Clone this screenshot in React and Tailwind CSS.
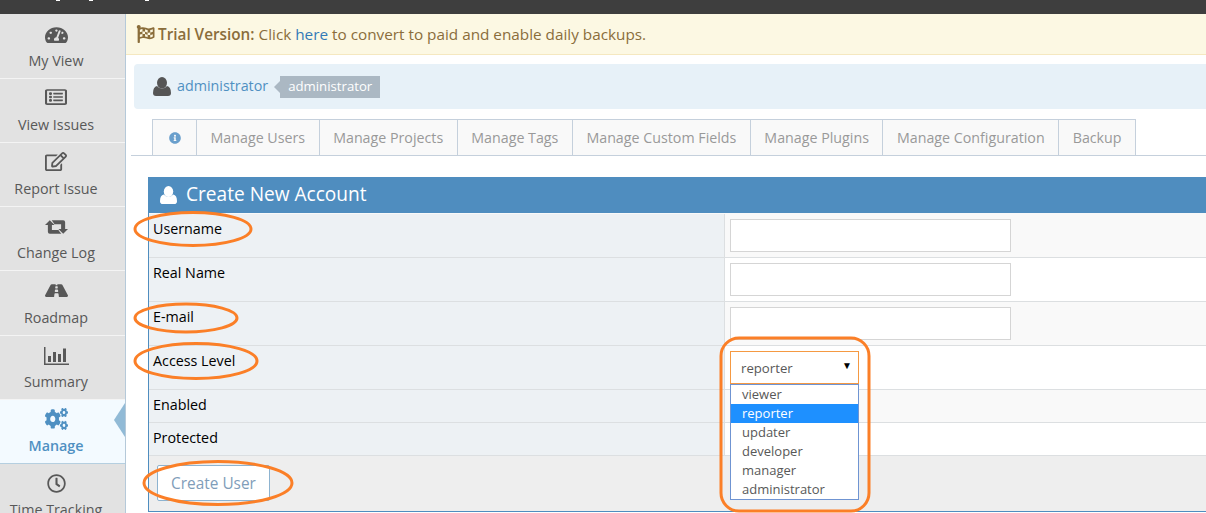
import { FaCogs, FaFlagCheckered, FaInfoCircle, FaRegClock, FaRegEdit, FaRegListAlt, FaRoad, FaTachometerAlt } from 'react-icons/fa'

function RetweetIcon({ className }) {
  return (
    <svg className={className} viewBox="0 0 24 14" fill="currentColor">
      <path d="M0 5 5 0l5 5H7.2v5H15l-1 .5 3 3.5H5q-2 0-2-2V5z" />
      <path d="M7 0h12q2 0 2 2v7h3l-5 5-5-5h2.800V4H10z" />
    </svg>
  )
}

function BarsIcon({ className }) {
  return (
    <svg className={className} viewBox="0 0 25 18" fill="currentColor">
      <rect x="0" y="0" width="1.500" height="18" />
      <rect x="0" y="16.500" width="25" height="1.500" />
      <rect x="4" y="9" width="3" height="6" />
      <rect x="9" y="5" width="3" height="10" />
      <rect x="14" y="7" width="3" height="8" />
      <rect x="19" y="1.500" width="3" height="13.500" />
    </svg>
  )
}

function UserIcon({ className }) {
  return (
    <svg className={className} viewBox="0 0 18 19" fill="currentColor">
      <ellipse cx="9" cy="5.800" rx="5" ry="5.800" />
      <path d="M0 16q0-6 4-7 2 2.500 5 2.500T14 9q4 1 4 7 0 3-3 3H3q-3 0-3-3z" />
    </svg>
  )
}

const menu = [
  { label: 'My View', icon: FaTachometerAlt, row: 'h-[65px] pt-[12px]', size: 'h-[18px] w-[23px]', text: 'top-[37px]' },
  { label: 'View Issues', icon: FaRegListAlt, row: 'h-[64px] pt-[9px]', size: 'h-[18px] w-[22px]', text: 'top-[36px]' },
  { label: 'Report Issue', icon: FaRegEdit, row: 'h-[64px] pt-[9px]', size: 'h-[19px] w-[22px]', text: 'top-[36px]' },
  { label: 'Change Log', icon: RetweetIcon, row: 'h-[64px] pt-[13px]', size: 'h-[14px] w-[23px]', text: 'top-[36px]' },
  { label: 'Roadmap', icon: FaRoad, row: 'h-[65px] pt-[11px]', size: 'h-[17px] w-[23px]', text: 'top-[37px]' },
  { label: 'Summary', icon: BarsIcon, row: 'h-[64px] pt-[11px]', size: 'h-[18px] w-[25px]', text: 'top-[36px]' },
  { label: 'Manage', icon: FaCogs, row: 'h-[64px] pt-[8px]', size: 'h-[22px] w-[23px]', text: 'top-[36px]', active: true },
  { label: 'Time Tracking', icon: FaRegClock, row: 'h-[64px] pt-[10px]', size: 'h-[19px] w-[19px]', text: 'top-[36px]' },
]

const tabs = ['Manage Users', 'Manage Projects', 'Manage Tags', 'Manage Custom Fields', 'Manage Plugins', 'Manage Configuration', 'Backup']
const levels = ['viewer', 'reporter', 'updater', 'developer', 'manager', 'administrator']

function Row({ label, h, top, shade, input, children }) {
  return (
    <div className={`flex border-b border-[#dcdfe1] ${h} ${shade ? 'bg-[#f9f9f9]' : 'bg-white'}`}>
      <div className={`w-[576px] shrink-0 bg-[#edf1f4] border-r border-[#dcdfe1] pl-[4px] text-black leading-5 ${top}`}>{label}</div>
      <div className="flex-1 pl-[5px] pt-[5px]">
        {input && <div className="h-[33px] w-[281px] border border-[#d5d5d5] bg-white" />}
        {children}
      </div>
    </div>
  )
}

export default function App() {
  return (
    <div className="relative flex h-[513px] w-[1206px] flex-col overflow-hidden bg-white font-['Open_Sans',sans-serif] text-[14.3px] text-[#585858]">
      <div className="relative h-[14px] shrink-0 bg-[#3e3e3e]">
        <span className="absolute left-[56px] top-0 h-[1px] w-[4px] bg-white" />
        <span className="absolute left-[89px] top-0 h-[1px] w-[4px] bg-white" />
        <span className="absolute left-[145px] top-0 h-[1px] w-[4px] bg-white" />
      </div>
      <div className="flex flex-1">
        <div className="w-[126px] shrink-0 border-r border-[#b5c9d9] bg-[#e2e2e2]">
          {menu.map((item) => (
            <div
              key={item.label}
              className={`relative flex flex-col items-center border-b pr-[13px] ${item.row} ${item.active ? 'border-[#b5cfe0] bg-[#f3faff] font-semibold text-[#4f90c2]' : 'border-[#f4f4f4] text-[#585858]'}`}
            >
              <item.icon className={`shrink-0 ${item.size}`} preserveAspectRatio="none" />
              <span className={`absolute whitespace-nowrap leading-5 ${item.text}`}>{item.label}</span>
              {item.active && <div className="absolute right-0 top-[3px] h-0 w-0 border-y-[17px] border-r-[11px] border-y-transparent border-r-[#91bad6]" />}
            </div>
          ))}
        </div>

        <div className="flex-1 overflow-hidden">
          <div className="flex h-[41px] items-center border-b border-[#f5e8c0] bg-[#fcf8e3] pl-[10px] text-[15.3px] text-[#8a6d3b]">
            <FaFlagCheckered className="mr-[3px] h-[18px] w-[19px]" />
            <b className="font-semibold">Trial Version:</b>
            <span className="ml-1">Click <span className="text-[#337ab7]">here</span> to convert to paid and enable daily backups.</span>
          </div>

          <div className="ml-[8px] mt-[9px] flex h-[45px] items-center rounded-l bg-[#e7f1f8] pl-[19px]">
            <UserIcon className="h-[19px] w-[18px] text-[#555555]" />
            <span className="ml-[6px] -mt-[2px] text-[#4f90c2]">administrator</span>
            <span className="ml-[6px] h-0 w-0 border-y-[6px] border-r-[6px] border-y-transparent border-r-[#abb8c3]" />
            <span className="flex h-[22px] items-center bg-[#abb8c3] px-2 text-[13.2px] text-white">administrator</span>
          </div>

          <div className="ml-[5px] mt-[10px] flex h-[37px] border-b border-[#c5d0dc] pl-[21px] text-[14.25px]">
            <div className="flex w-[45px] items-center justify-center border border-b-0 border-[#c5d0dc] bg-[#f9f9f9] text-[#6a9fcc]">
              <FaInfoCircle className="h-[12px] w-[12px]" />
            </div>
            {tabs.map((tab) => (
              <div key={tab} className="flex items-center border-y border-r border-b-0 border-[#c5d0dc] bg-[#f9f9f9] px-[13.5px] text-[#999999]">{tab}</div>
            ))}
          </div>

          <div className="ml-[22px] mt-[21px] border-l border-[#4f8dbf]">
            <div className="flex h-[36px] items-center bg-[#4f8dbf] pl-[11px] text-[19.1px] text-white">
              <UserIcon className="h-[18px] w-[17px]" />
              <span className="ml-[9px] -mt-[1px]">Create New Account</span>
            </div>
            <Row label="Username" h="h-[45px] pt-[1px]" top="pt-[5px]" shade input />
            <Row label="Real Name" h="h-[44px]" top="pt-[5px]" input />
            <Row label="E-mail" h="h-[44px]" top="pt-[5px]" shade input />
            <Row label="Access Level" h="h-[44px]" top="pt-[5px]">
              <div className="flex h-[33px] w-[129px] items-center justify-between border border-[#f59942] bg-white pl-[10px] pr-[6px] text-[13.2px]">
                <span className="mt-[2px]">reporter</span>
                <span className="mb-1 text-[10px] text-black">▼</span>
              </div>
            </Row>
            <Row label="Enabled" h="h-[33px]" top="pt-[5px]" shade />
            <Row label="Protected" h="h-[33px]" top="pt-[5px]" />
            <div className="flex h-[56px] items-start border-b border-[#4f8dbf] bg-[#eeeeee] pl-[8px] pt-[9px]">
              <div className="flex h-[36px] w-[113px] items-center justify-center rounded-[2px] border border-[#8db3d0] bg-white pt-[2px] text-[15.4px] text-[#7f9db9]">Create User</div>
            </div>
          </div>
        </div>
      </div>

      {/* open select list */}
      <div className="absolute left-[730px] top-[384px] w-[129px] border border-[#6f94d2] bg-white text-[13px] leading-[19px]">
        {levels.map((level) => (
          <div key={level} className={`h-[19px] pl-[11px] ${level === 'reporter' ? 'bg-[#1e90ff] text-white' : ''}`}>{level}</div>
        ))}
      </div>

      {/* hand drawn orange marks */}
      <svg className="absolute left-0 top-0" width="1206" height="513" fill="none" stroke="#fb7f27" strokeWidth="3">
        <ellipse cx="193" cy="229" rx="58" ry="16.500" />
        <ellipse cx="186" cy="318" rx="51" ry="14" />
        <ellipse cx="196" cy="361" rx="61" ry="17.500" />
        <ellipse cx="218" cy="483" rx="74" ry="21.500" />
        <rect x="721" y="338" width="148" height="173" rx="18" />
      </svg>
    </div>
  )
}
